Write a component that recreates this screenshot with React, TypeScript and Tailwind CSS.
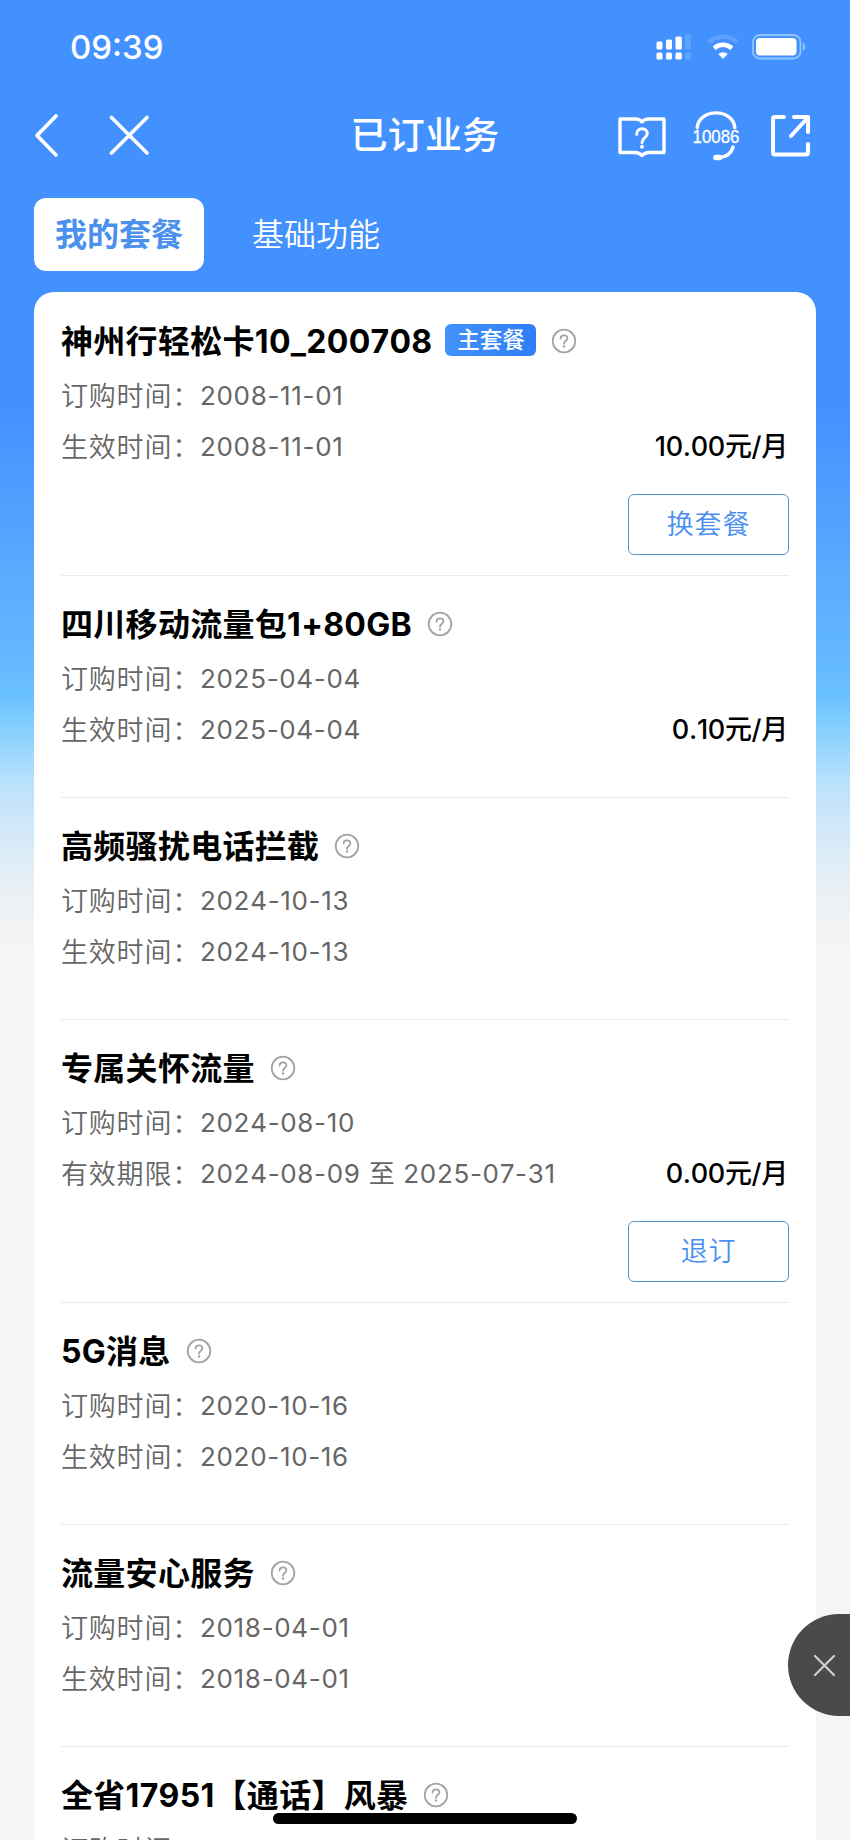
type Plan = {
  name: string;
  badge?: string;
  orderedAt: string;
  periodLabel: string;
  period: string;
  price?: string;
  action?: string;
};

const plans: Plan[] = [
  {
    name: '神州行轻松卡10_200708',
    badge: '主套餐',
    orderedAt: '2008-11-01',
    periodLabel: '生效时间：',
    period: '2008-11-01',
    price: '10.00元/月',
    action: '换套餐',
  },
  {
    name: '四川移动流量包1+80GB',
    orderedAt: '2025-04-04',
    periodLabel: '生效时间：',
    period: '2025-04-04',
    price: '0.10元/月',
  },
  {
    name: '高频骚扰电话拦截',
    orderedAt: '2024-10-13',
    periodLabel: '生效时间：',
    period: '2024-10-13',
  },
  {
    name: '专属关怀流量',
    orderedAt: '2024-08-10',
    periodLabel: '有效期限：',
    period: '2024-08-09 至 2025-07-31',
    price: '0.00元/月',
    action: '退订',
  },
  {
    name: '5G消息',
    orderedAt: '2020-10-16',
    periodLabel: '生效时间：',
    period: '2020-10-16',
  },
  {
    name: '流量安心服务',
    orderedAt: '2018-04-01',
    periodLabel: '生效时间：',
    period: '2018-04-01',
  },
  {
    name: '全省17951【通话】风暴',
    orderedAt: '2018-04-01',
    periodLabel: '生效时间：',
    period: '2018-04-01',
  },
];

const StatusBar = () => (
  <div className="flex h-[94px] items-center justify-between pl-[70px] pr-[43px]">
    <span className="text-[33px] font-medium leading-none">09:39</span>
    <div className="flex items-center">
      <svg width="36" height="26" viewBox="0 0 36 26" fill="currentColor">
        <rect x="0.5" y="7.5" width="6" height="8" rx="1.5" />
        <rect x="10" y="5.5" width="6" height="10" rx="1.5" />
        <rect x="19.5" y="2.5" width="6.3" height="13" rx="1.5" />
        <rect x="29" y="0" width="6" height="15.5" rx="1.5" opacity="0.15" />
        <rect x="0.5" y="18.5" width="6" height="7" rx="1.5" />
        <rect x="10" y="18.5" width="6" height="7" rx="1.5" />
        <rect x="19.5" y="18.5" width="6.3" height="7" rx="1.5" />
        <rect x="29" y="18.5" width="6" height="7" rx="1.5" opacity="0.15" />
      </svg>
      <svg className="ml-[15px]" width="32" height="26" viewBox="0 0 32 26" fill="none" stroke="currentColor">
        <path d="M2 8.4a20 20 0 0 1 28 0" strokeWidth="4.6" opacity="0.15" />
        <path d="M7.2 14.3a12.8 12.8 0 0 1 17.6 0" strokeWidth="4.4" />
        <path d="M16 25l-4.7-4.9a6.6 6.6 0 0 1 9.4 0z" fill="currentColor" stroke="none" />
      </svg>
      <svg className="ml-[13px]" width="55" height="26" viewBox="0 0 55 26" fill="none">
        <rect x="1" y="1" width="47.5" height="23.5" rx="7" stroke="#8ec5ff" strokeWidth="1.8" />
        <rect x="4" y="4" width="40.5" height="17.5" rx="4" fill="currentColor" />
        <path d="M50.8 8.5c3.2 1.3 3.2 7.2 0 8.5z" fill="#8ec5ff" />
      </svg>
    </div>
  </div>
);

const NavBar = () => (
  <div className="grid h-[84px] grid-cols-[1fr_auto_1fr] items-center pb-px pl-[34px] pr-[37px]">
    <div className="flex items-center">
      <svg width="26" height="46" viewBox="0 0 26 46" fill="none" stroke="currentColor" strokeWidth="3.8" strokeLinecap="round" strokeLinejoin="round">
        <path d="M22 3L3 22.5L22 42" />
      </svg>
      <svg className="ml-[48px]" width="42" height="42" viewBox="0 0 42 42" fill="none" stroke="currentColor" strokeWidth="3.6" strokeLinecap="round">
        <path d="M3.5 2.5L39 38M39 2.5L3.5 38" />
      </svg>
    </div>
    <h1 className="pl-[3px] text-[37px] font-medium leading-none tracking-[0.3px]">已订业务</h1>
    <div className="flex items-center justify-end">
      <svg width="50" height="46" viewBox="0 0 50 46" fill="none" stroke="currentColor" strokeWidth="3.4" strokeLinejoin="round">
        <path d="M3 6H18.500Q22.500 6 25 9Q27.500 6 31.500 6H47V39.500H31.500Q28 39.500 25 42.500Q22 39.500 18.500 39.500H3Z" />
        <path d="M19.700 21.300C19.700 13.800 30.300 14.300 30.300 20.500C30.300 24.600 25 24.800 25 29.500" strokeWidth="3" strokeLinecap="round" />
        <circle cx="25" cy="33.800" r="2" fill="currentColor" stroke="none" />
      </svg>
      <svg className="ml-[24px] overflow-visible" width="50" height="52" viewBox="0 0 50 52" fill="none" stroke="currentColor" strokeWidth="3.4" strokeLinecap="round">
        <path d="M6.200 17.500C8 -2 42 -2 43.800 17.500" />
        <path d="M42 37C40.500 43 35.500 47 28 47.600" />
        <rect x="22.200" y="44.800" width="9" height="5.400" rx="2.700" fill="currentColor" stroke="none" />
        <text x="25" y="32.500" textAnchor="middle" textLength="47" lengthAdjust="spacingAndGlyphs" fill="currentColor" stroke="currentColor" strokeWidth="0.3" className="font-['Liberation_Sans',sans-serif] text-[18.5px]">
          10086
        </text>
      </svg>
      <svg className="ml-[28px]" width="44" height="46" viewBox="0 0 44 46" fill="none" stroke="currentColor" strokeWidth="4" strokeLinecap="round" strokeLinejoin="round">
        <path d="M15 4H6Q4 4 4 6V39.500Q4 41.500 6 41.500H37Q39 41.500 39 39.500V31" />
        <path d="M25 4H39V19M38 5.500L22 23" />
      </svg>
    </div>
  </div>
);

const HelpIcon = () => (
  <svg className="shrink-0" width="26" height="26" viewBox="0 0 26 26" fill="none" stroke="#a3a3a3" strokeWidth="1.8">
    <circle cx="13" cy="13" r="11.3" />
    <path d="M9.600 10.600C9.600 6.200 16.400 6.400 16.400 10.200C16.400 12.800 13 12.800 13 15.800" strokeLinecap="round" />
    <circle cx="13" cy="18.500" r="1.200" fill="#a3a3a3" stroke="none" />
  </svg>
);

const Meta = ({ label, value }: { label: string; value: string }) => (
  <div className="flex items-center text-[#666]">
    <span className="w-[139px] whitespace-nowrap pt-[3px] text-[27px] font-[350] tracking-[0.8px]">{label}</span>
    <span className="whitespace-pre text-[26px] font-normal tracking-[0.68px] [font-kerning:none]">{value}</span>
  </div>
);

const PlanItem = ({ plan }: { plan: Plan }) => (
  <li className="border-b border-[#ebebeb] pt-[29px]">
    <div className="flex h-10 items-center">
      <h2 className="whitespace-nowrap text-[32px] font-bold tracking-[0.3px] text-black [font-kerning:none]">{plan.name}</h2>
      {plan.badge && (
        <span className="mb-[5px] ml-[13px] flex h-8 w-[91px] items-center justify-center rounded-md bg-gradient-to-r from-[#4391fb] to-[#2f7df8] text-[22.5px] font-medium text-white">
          {plan.badge}
        </span>
      )}
      <span className="mb-[3px] ml-[15px]">
        <HelpIcon />
      </span>
    </div>
    <div className="mt-2 flex h-[51px] items-center">
      <Meta label="订购时间：" value={plan.orderedAt} />
    </div>
    <div className="flex h-[51px] items-center justify-between">
      <Meta label={plan.periodLabel} value={plan.period} />
      {plan.price && (
        <span className="pr-px pt-[2px] text-[27px] font-medium tracking-[-0.3px] text-black [font-kerning:none]">{plan.price}</span>
      )}
    </div>
    {plan.action ? (
      <div className="flex justify-end pb-5 pt-[22px]">
        <button className="h-[61px] w-[161px] rounded-md border-[1.5px] border-[#4f95d0] pt-[2px] text-[27px] font-[350] tracking-[0.8px] text-[#4a8ff0]">
          {plan.action}
        </button>
      </div>
    ) : (
      <div className="h-[42px]" />
    )}
  </li>
);

export default function App() {
  return (
    <div className="relative h-[1840px] w-[850px] overflow-hidden bg-[#f5f5f5] bg-[linear-gradient(180deg,#4391ff_0px,#4391ff_410px,#55a7ff_550px,#62b7ff_650px,#6ac1ff_695px,#8fd3fd_740px,#b8e0fb_780px,#cfe6fa_820px,#dfeef7_865px,#eef1f4_905px,#f5f5f5_955px)] font-['Inter','Noto_Sans_CJK_SC',sans-serif]">
      <header className="text-white">
        <StatusBar />
        <NavBar />
        <nav className="flex items-center pl-[34px] pt-5 text-[32px]">
          <button className="h-[73px] w-[170px] rounded-xl bg-white font-bold text-[#4a90ec]">我的套餐</button>
          <button className="ml-12 h-[73px] font-[350]">基础功能</button>
        </nav>
      </header>

      <main className="ml-[34px] mt-[21px] w-[782px] rounded-t-[20px] bg-white px-[27px] pt-px">
        <ul>
          {plans.map((plan) => (
            <PlanItem key={plan.name} plan={plan} />
          ))}
        </ul>
      </main>

      {/* Floating close handle docked to the right edge */}
      <button className="absolute right-0 top-[1614px] flex h-[102px] w-[62px] items-center rounded-l-[51px] bg-[#4a4a4a] pl-[25px]">
        <svg width="23" height="23" viewBox="0 0 23 23" fill="none" stroke="#cfcfcf" strokeWidth="2.2" strokeLinecap="round">
          <path d="M2 2L21 21M21 2L2 21" />
        </svg>
      </button>

      {/* Home indicator */}
      <div className="absolute left-[273px] top-[1813px] h-[11px] w-[304px] rounded-full bg-black" />
    </div>
  );
}
